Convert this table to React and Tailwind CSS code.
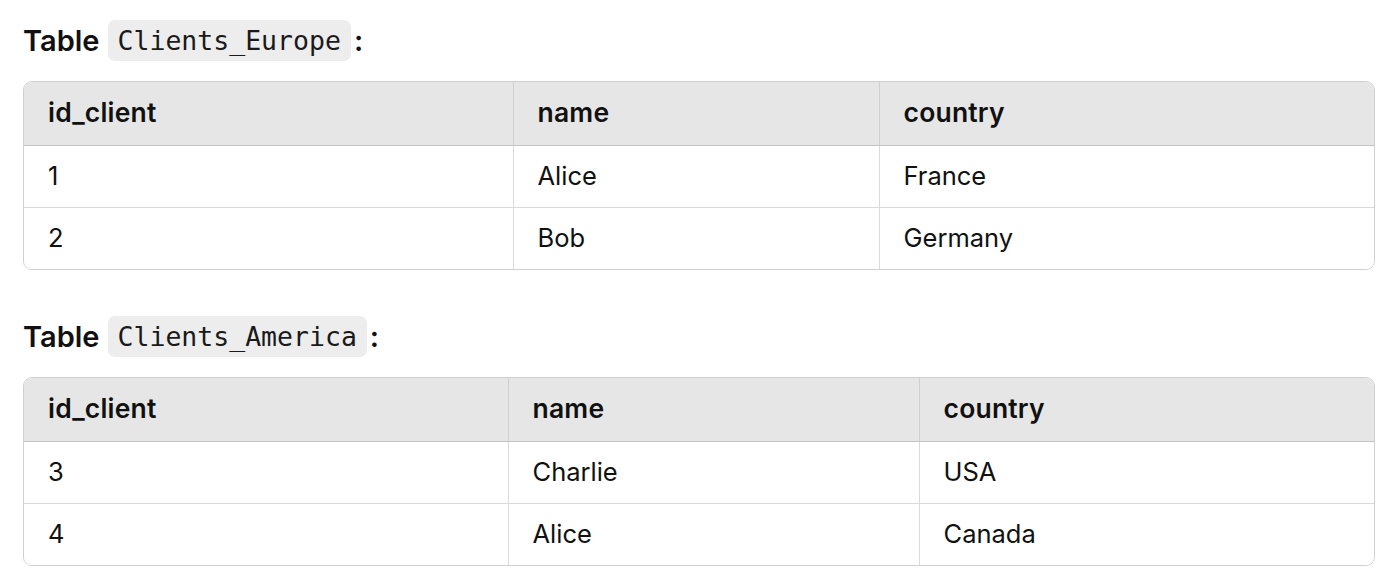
import React from "react";

const tables = [
  {
    name: "Clients_Europe",
    widths: [489, 366, 497],
    rows: [["1", "Alice", "France"], ["2", "Bob", "Germany"]],
  },
  {
    name: "Clients_America",
    widths: [484, 411, 457],
    rows: [["3", "Charlie", "USA"], ["4", "Alice", "Canada"]],
  },
];

function DataTable({ t }) {
  return (
    <div className="w-[1352px] rounded-[9px] border border-[#cfcfcf] overflow-hidden">
      <table className="w-full border-collapse table-fixed">
        <colgroup>
          {t.widths.map((w, i) => (
            <col key={i} style={{ width: w }} />
          ))}
        </colgroup>
        <thead>
          <tr className="bg-[#e6e6e6] h-[63px]">
            {["id_client", "name", "country"].map((h, i) => (
              <th
                key={h}
                className={`text-left font-semibold text-[26.5px] tracking-[0.2px] text-[#111] pl-6 border-b border-[#c4c4c4] ${i > 0 ? "border-l border-l-[#cfcfcf]" : ""}`}
              >
                {h}
              </th>
            ))}
          </tr>
        </thead>
        <tbody>
          {t.rows.map((r, ri) => (
            <tr key={ri} className={`h-[62px] bg-white ${ri > 0 ? "border-t border-[#dadada]" : ""}`}>
              {r.map((c, i) => (
                <td
                  key={i}
                  className={`pl-6 text-[25.5px] text-[#111] ${i > 0 ? "border-l border-[#dadada]" : ""}`}
                >
                  {c}
                </td>
              ))}
            </tr>
          ))}
        </tbody>
      </table>
    </div>
  );
}

function Heading({ name }) {
  return (
    <div className="flex items-center h-[41px] text-[29px] font-semibold text-[#111]">
      <span>Table</span>
      <span className="ml-[8px] h-[41px] flex items-center px-[10px] rounded-[7px] bg-[#ededed] font-normal text-[26.5px] text-[#1a1a1a]" style={{ fontFamily: '"DejaVu Sans Mono", monospace' }}>
        {name}
      </span>
      <span className="ml-[3px]">:</span>
    </div>
  );
}

export default function App() {
  return (
    <div className="w-[1400px] h-[579px] bg-white pl-[23px] pt-[20px]" style={{ fontFamily: "Inter, 'Liberation Sans', sans-serif" }}>
      <Heading name={tables[0].name} />
      <div className="mt-[20px]">
        <DataTable t={tables[0]} />
      </div>
      <div className="mt-[46px]">
        <Heading name={tables[1].name} />
      </div>
      <div className="mt-[20px]">
        <DataTable t={tables[1]} />
      </div>
    </div>
  );
}
